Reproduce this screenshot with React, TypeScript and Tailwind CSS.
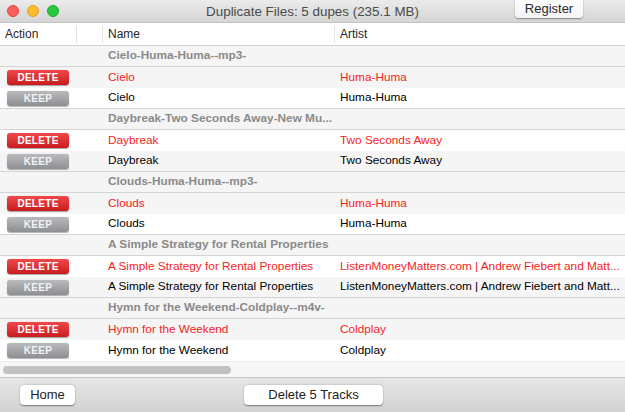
const groups = [
  { label: 'Cielo-Huma-Huma--mp3-', name: 'Cielo', artist: 'Huma-Huma' },
  { label: 'Daybreak-Two Seconds Away-New Mu...', name: 'Daybreak', artist: 'Two Seconds Away' },
  { label: 'Clouds-Huma-Huma--mp3-', name: 'Clouds', artist: 'Huma-Huma' },
  {
    label: 'A Simple Strategy for Rental Properties',
    name: 'A Simple Strategy for Rental Properties',
    artist: 'ListenMoneyMatters.com | Andrew Fiebert and Matt...',
  },
  { label: 'Hymn for the Weekend-Coldplay--m4v-', name: 'Hymn for the Weekend', artist: 'Coldplay' },
];

const DeleteButton = () => (
  <div className="ml-[7px] flex h-[15px] w-[62px] items-center justify-center rounded-[3px] bg-gradient-to-b from-[#f0484a] to-[#c8191c] text-[10px] font-bold tracking-[0.3px] text-white shadow-[0_0.5px_1px_rgba(0,0,0,0.35)]">
    DELETE
  </div>
);

const KeepButton = () => (
  <div className="ml-[7px] flex h-[15px] w-[62px] items-center justify-center rounded-[3px] bg-gradient-to-b from-[#b9babd] to-[#8e8f93] text-[10px] font-bold tracking-[0.3px] text-[#f2f2f2] shadow-[0_0.5px_1px_rgba(0,0,0,0.3)]">
    KEEP
  </div>
);

const TrafficLights = () => (
  <div className="flex items-center gap-[8px] pl-[7px]">
    <span className="h-[12px] w-[12px] rounded-full border border-[#e0443e] bg-[#fc5f57]" />
    <span className="h-[12px] w-[12px] rounded-full border border-[#dea123] bg-[#fdbc2e]" />
    <span className="h-[12px] w-[12px] rounded-full border border-[#1aab29] bg-[#28c840]" />
  </div>
);

export default function App() {
  return (
    <div
      className="flex h-[412px] w-[625px] flex-col overflow-hidden bg-white text-[11.8px] text-black"
      style={{ fontFamily: '"Liberation Sans", Arial, sans-serif' }}
    >
      {/* Title bar */}
      <div className="relative flex h-[23px] shrink-0 items-center bg-gradient-to-b from-[#ebebeb] to-[#d5d5d5] border-b border-[#c2c2c2]">
        <TrafficLights />
        <div className="absolute inset-x-0 top-[2px] text-center text-[13.4px] text-[#4a4a4a]">
          Duplicate Files: 5 dupes (235.1 MB)
        </div>
        <div className="absolute left-[515px] top-[-3px] flex h-[21px] w-[68px] items-center justify-center rounded-[4px] bg-gradient-to-b from-white to-[#f4f4f4] pt-[2px] text-[13px] text-[#2a2a2a] shadow-[0_0.5px_1.5px_rgba(0,0,0,0.4)]">
          Register
        </div>
      </div>

      {/* Column headers */}
      <div className="flex h-[23px] shrink-0 items-center border-b border-[#d4d4d4] bg-white text-[12px] text-[#262626]">
        <div className="flex h-[17px] w-[77px] items-center border-r border-[#e2e2e2] pl-[5px]">Action</div>
        <div className="h-[17px] w-[26px] border-r border-[#e2e2e2]" />
        <div className="flex h-[17px] w-[232px] items-center border-r border-[#e2e2e2] pl-[5px]">Name</div>
        <div className="pl-[5px]">Artist</div>
      </div>

      {/* Rows */}
      <div className="flex flex-col">
        {groups.map((g, i) => (
          <div key={g.label} className="flex flex-col">
            <div className="flex h-[21px] items-center border-b border-[#d4d4d4] bg-[#f5f5f5]">
              <div className="w-[103px]" />
              <div className="w-[232px] overflow-hidden whitespace-nowrap pl-[5px] text-[11.8px] font-bold text-[#8a8a8a]">
                {g.label}
              </div>
            </div>
            <div className={`flex h-[21px] items-center ${i % 2 === 0 ? 'bg-[#f5f5f5]' : 'bg-white'}`}>
              <div className="w-[103px]">
                <DeleteButton />
              </div>
              <div className="w-[232px] overflow-hidden whitespace-nowrap pl-[5px] text-[#f5231c]">{g.name}</div>
              <div className="min-w-0 flex-1 whitespace-nowrap pl-[5px] text-[#f5231c]">{g.artist}</div>
            </div>
            <div
              className={`flex h-[21px] items-center ${i < groups.length - 1 ? 'border-b border-[#d4d4d4]' : ''} ${
                i % 2 === 1 ? 'bg-[#f5f5f5]' : 'bg-white'
              }`}
            >
              <div className="w-[103px]">
                <KeepButton />
              </div>
              <div className="w-[232px] overflow-hidden whitespace-nowrap pl-[5px]">{g.name}</div>
              <div className="min-w-0 flex-1 whitespace-nowrap pl-[5px]">{g.artist}</div>
            </div>
          </div>
        ))}
      </div>

      {/* Horizontal scroller */}
      <div className="flex flex-1 flex-col justify-center border-t border-[#ececec] bg-[#f7f7f7] px-[3px]">
        <div className="h-[8px] w-[228px] rounded-full bg-[#c2c2c2]" />
      </div>

      {/* Bottom toolbar */}
      <div className="relative flex h-[35px] shrink-0 items-center border-t border-[#c4c4c4] bg-gradient-to-b from-[#e6e6e6] to-[#d2d2d2]">
        <div className="ml-[20px] flex h-[20px] w-[55px] items-center justify-center rounded-[4px] bg-white text-[13px] text-[#222] shadow-[0_0.5px_1.5px_rgba(0,0,0,0.45)]">
          Home
        </div>
        <div className="ml-[169px] flex h-[20px] w-[139px] items-center justify-center rounded-[4px] bg-white text-[13px] text-[#222] shadow-[0_0.5px_1.5px_rgba(0,0,0,0.45)]">
          Delete 5 Tracks
        </div>
      </div>
    </div>
  );
}
